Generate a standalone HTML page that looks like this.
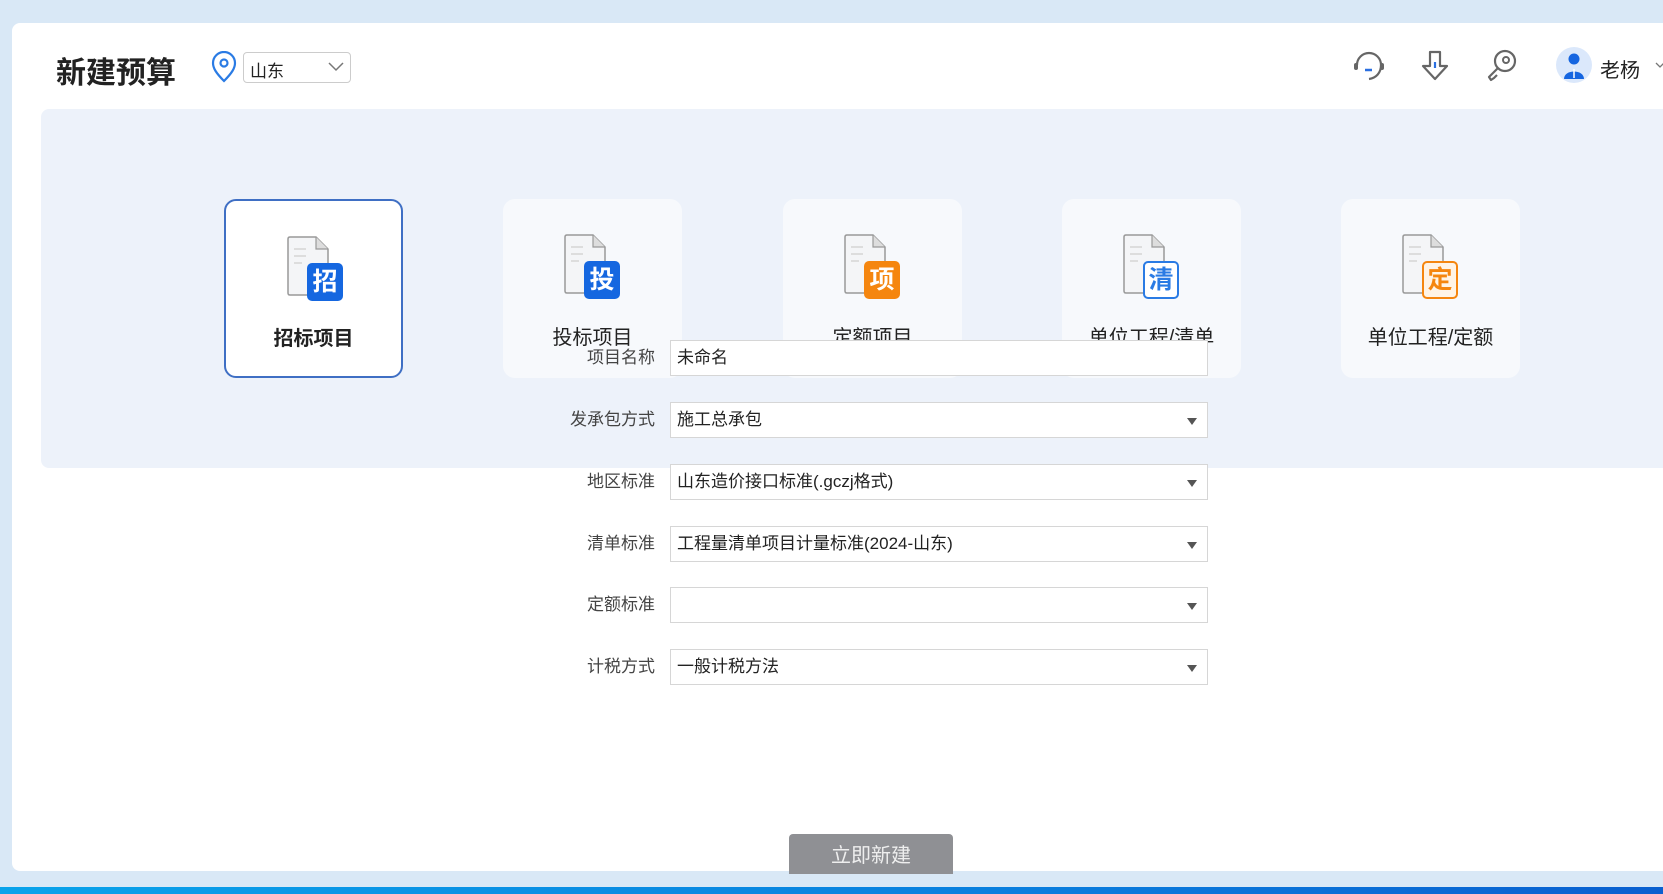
<!DOCTYPE html>
<html><head><meta charset="utf-8"><style>
*{margin:0;padding:0;box-sizing:border-box}
body{width:1663px;height:894px;overflow:hidden;background:#d9e8f6;font-family:"Liberation Sans","Noto Sans CJK SC",sans-serif;position:relative;color:#222}
.panel{position:absolute;left:12px;top:23px;width:1680px;height:848px;background:#fff;border-radius:8px}
.title{position:absolute;left:56px;top:48px;font-size:30px;font-weight:bold;color:#222}
.sel{position:absolute;left:243px;top:52px;width:108px;height:31px;border:1px solid #ccc;border-radius:4px;font-size:17px;padding:4px 6px}
.gray{position:absolute;left:41px;top:109px;width:1640px;height:359px;background:#edf2fa;border-radius:8px}
.card{position:absolute;top:199px;width:179px;height:179px;background:#f7f9fc;border-radius:12px}
.card.on{background:#fff;border:2px solid #3f6fc4}
.card .lb{position:absolute;left:0;right:0;top:122px;text-align:center;font-size:20px;color:#222}
.card.on .lb{top:121px}
.doc{position:absolute;left:60px;top:34px}
.badge{position:absolute;left:81px;top:62px;width:36px;height:38px;border-radius:5px;color:#fff;font-size:25px;font-weight:bold;text-align:center;line-height:38px}
.row{position:absolute;left:0;height:36px}
.row .l{position:absolute;left:500px;width:155px;text-align:right;font-size:17px;color:#444;line-height:36px}
.row .i{position:absolute;left:670px;width:538px;height:36px;background:#fff;border:1.5px solid #d6d6d6;font-size:17px;line-height:33px;padding-left:6px;color:#222}
.row .i.dd:after{content:"";position:absolute;right:10px;top:15px;border-left:5px solid transparent;border-right:5px solid transparent;border-top:7px solid #555}
.btn{position:absolute;left:789px;top:834px;width:164px;height:40px;background:#8f9094;border-radius:4px 4px 0 0;color:#eee;font-size:20px;text-align:center;line-height:44px}
.band{position:absolute;left:0;top:887px;width:1663px;height:7px;background:linear-gradient(90deg,#0aa3ea,#0a7fde 60%,#0a5fcf)}
</style></head><body>
<div class="panel"></div>
<div class="title">新建预算</div>
<svg style="position:absolute;left:210px;top:51px" width="28" height="32" viewBox="0 0 28 32"><path d="M14 30 C6 22 3 17 3 12 A11 11 0 0 1 25 12 C25 17 22 22 14 30Z" fill="none" stroke="#2a7be4" stroke-width="2.2"/><circle cx="14" cy="12" r="3.5" fill="none" stroke="#2a7be4" stroke-width="2.2"/></svg>
<div class="sel">山东<svg style="position:absolute;right:6px;top:9px" width="16" height="10"><path d="M1 1 L8 8 L15 1" fill="none" stroke="#777" stroke-width="1.5"/></svg></div>
<svg style="position:absolute;left:1352px;top:48px" width="34" height="36" viewBox="0 0 34 36"><path d="M5 17 A12 12 0 0 1 29 17" fill="none" stroke="#666" stroke-width="2.2"/><path d="M29 17 C29 25 24 30 17 31" fill="none" stroke="#666" stroke-width="2.2"/><rect x="2" y="15" width="4" height="7" rx="2" fill="#666"/><rect x="28" y="15" width="4" height="7" rx="2" fill="#666"/><path d="M13 22 H20" stroke="#2a6fe0" stroke-width="2.5"/></svg>
<svg style="position:absolute;left:1420px;top:48px" width="30" height="36" viewBox="0 0 30 36"><path d="M10 4 H20 V18 H27 L15 31 L3 18 H10 Z" fill="none" stroke="#666" stroke-width="2.2" stroke-linejoin="round"/><path d="M15 14 V20" stroke="#2a6fe0" stroke-width="2.2"/></svg>
<svg style="position:absolute;left:1485px;top:48px" width="34" height="36" viewBox="0 0 34 36"><circle cx="20" cy="13" r="10" fill="none" stroke="#666" stroke-width="2.2"/><circle cx="21" cy="12" r="3" fill="none" stroke="#666" stroke-width="2"/><path d="M13 20 L4 29 L6 32 L9 30 L12 27" fill="none" stroke="#666" stroke-width="2.2" stroke-linejoin="round"/></svg>
<svg style="position:absolute;left:1556px;top:47px" width="36" height="36" viewBox="0 0 36 36"><circle cx="18" cy="18" r="18" fill="#dbe8fb"/><circle cx="18" cy="12" r="5.5" fill="#1565e0"/><path d="M8 32 C8 22 28 22 28 32 Z" fill="#1565e0"/><path d="M18 22 V31" stroke="#fff" stroke-width="1.5"/></svg>
<div style="position:absolute;left:1600px;top:54px;font-size:20px">老杨</div>
<svg style="position:absolute;left:1655px;top:62px" width="10" height="8"><path d="M1 1 L5 5 L9 1" fill="none" stroke="#777" stroke-width="1.3"/></svg>

<div class="gray"></div>
<div class="card on" style="left:224px"><svg class="doc" width="44" height="64" viewBox="0 0 44 64"><path d="M4 2 H30 L42 14 V58 Q42 60 40 60 H4 Q2 60 2 58 V4 Q2 2 4 2Z" fill="#f4f5f7" stroke="#999" stroke-width="1.5"/><path d="M30 2 V14 H42" fill="#ddd" stroke="#999" stroke-width="1.2"/><path d="M8 14 H20 M8 21 H20 M8 28 H16" stroke="#ddd" stroke-width="2"/></svg><div class="badge" style="background:#1567e0">招</div><div class="lb" style="font-weight:bold">招标项目</div></div>
<div class="card" style="left:503px"><svg class="doc" width="44" height="64" viewBox="0 0 44 64"><path d="M4 2 H30 L42 14 V58 Q42 60 40 60 H4 Q2 60 2 58 V4 Q2 2 4 2Z" fill="#f4f5f7" stroke="#999" stroke-width="1.5"/><path d="M30 2 V14 H42" fill="#ddd" stroke="#999" stroke-width="1.2"/><path d="M8 14 H20 M8 21 H20 M8 28 H16" stroke="#ddd" stroke-width="2"/></svg><div class="badge" style="background:#1567e0">投</div><div class="lb">投标项目</div></div>
<div class="card" style="left:783px"><svg class="doc" width="44" height="64" viewBox="0 0 44 64"><path d="M4 2 H30 L42 14 V58 Q42 60 40 60 H4 Q2 60 2 58 V4 Q2 2 4 2Z" fill="#f4f5f7" stroke="#999" stroke-width="1.5"/><path d="M30 2 V14 H42" fill="#ddd" stroke="#999" stroke-width="1.2"/><path d="M8 14 H20 M8 21 H20 M8 28 H16" stroke="#ddd" stroke-width="2"/></svg><div class="badge" style="background:#f5860f">项</div><div class="lb">定额项目</div></div>
<div class="card" style="left:1062px"><svg class="doc" width="44" height="64" viewBox="0 0 44 64"><path d="M4 2 H30 L42 14 V58 Q42 60 40 60 H4 Q2 60 2 58 V4 Q2 2 4 2Z" fill="#f4f5f7" stroke="#999" stroke-width="1.5"/><path d="M30 2 V14 H42" fill="#ddd" stroke="#999" stroke-width="1.2"/><path d="M8 14 H20 M8 21 H20 M8 28 H16" stroke="#ddd" stroke-width="2"/></svg><div class="badge" style="background:#fff;border:2px solid #2a7be4;color:#2a7be4;line-height:34px">清</div><div class="lb">单位工程/清单</div></div>
<div class="card" style="left:1341px"><svg class="doc" width="44" height="64" viewBox="0 0 44 64"><path d="M4 2 H30 L42 14 V58 Q42 60 40 60 H4 Q2 60 2 58 V4 Q2 2 4 2Z" fill="#f4f5f7" stroke="#999" stroke-width="1.5"/><path d="M30 2 V14 H42" fill="#ddd" stroke="#999" stroke-width="1.2"/><path d="M8 14 H20 M8 21 H20 M8 28 H16" stroke="#ddd" stroke-width="2"/></svg><div class="badge" style="background:#fff4e6;border:2px solid #f5860f;color:#f5860f;line-height:34px">定</div><div class="lb">单位工程/定额</div></div>

<div class="row" style="top:340px"><div class="l">项目名称</div><div class="i">未命名</div></div>
<div class="row" style="top:402px"><div class="l">发承包方式</div><div class="i dd">施工总承包</div></div>
<div class="row" style="top:464px"><div class="l">地区标准</div><div class="i dd">山东造价接口标准(.gczj格式)</div></div>
<div class="row" style="top:526px"><div class="l">清单标准</div><div class="i dd">工程量清单项目计量标准(2024-山东)</div></div>
<div class="row" style="top:587px"><div class="l">定额标准</div><div class="i dd"></div></div>
<div class="row" style="top:649px"><div class="l">计税方式</div><div class="i dd">一般计税方法</div></div>

<div class="btn">立即新建</div>
<div class="band"></div>
</body></html>
